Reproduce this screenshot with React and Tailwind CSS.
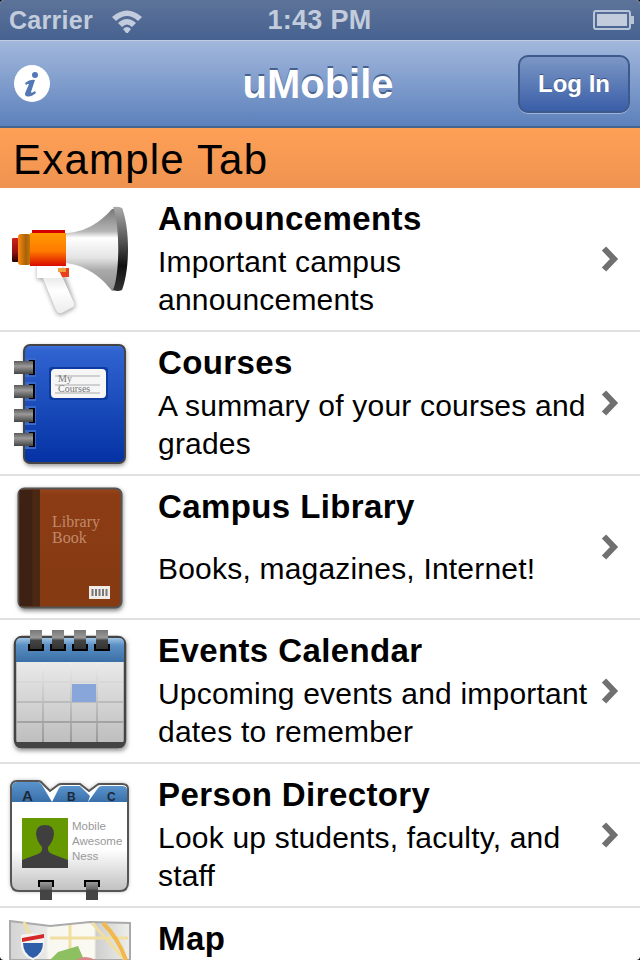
const F = "font-['Liberation_Sans',Arial,sans-serif]";

function Megaphone() {
  return (
    <svg width="144" height="142" viewBox="0 0 144 142" className="block">
      <defs>
        <linearGradient id="mh" x1="0" y1="0" x2="0" y2="1">
          <stop offset="0" stopColor="#777" /><stop offset=".28" stopColor="#b5b5b5" /><stop offset=".36" stopColor="#fff" />
          <stop offset=".6" stopColor="#e4e4e4" /><stop offset=".75" stopColor="#aaa" /><stop offset="1" stopColor="#8f8f8f" />
        </linearGradient>
        <linearGradient id="mo" x1="0" y1="0" x2="0" y2="1">
          <stop offset="0" stopColor="#ff9a00" /><stop offset=".55" stopColor="#ff7a00" /><stop offset="1" stopColor="#d80a00" />
        </linearGradient>
        <linearGradient id="mr" x1="0" y1="0" x2="0" y2="1">
          <stop offset="0" stopColor="#d0221a" /><stop offset=".6" stopColor="#901010" /><stop offset="1" stopColor="#200" />
        </linearGradient>
        <linearGradient id="mc" x1="0" y1="0" x2="1" y2="0">
          <stop offset="0" stopColor="#ff8a10" /><stop offset=".6" stopColor="#a8620a" /><stop offset="1" stopColor="#c87a08" />
        </linearGradient>
        <linearGradient id="me" x1="0" y1="0" x2="0" y2="1">
          <stop offset="0" stopColor="#aaa" /><stop offset=".4" stopColor="#555" /><stop offset=".7" stopColor="#111" /><stop offset="1" stopColor="#333" />
        </linearGradient>
        <linearGradient id="mw" x1="0" y1="0" x2="0" y2="1">
          <stop offset="0" stopColor="#e8e8e8" /><stop offset=".4" stopColor="#fff" /><stop offset="1" stopColor="#ececec" />
        </linearGradient>
        <filter id="mb" x="-30%" y="-30%" width="160%" height="160%"><feGaussianBlur stdDeviation="2" /></filter>
      </defs>
      <path d="M37 78 H62 L75 116 Q76 120 71 122 L62 127 Q58 128 56 124 L43 92 H37 Z" fill="#888" filter="url(#mb)" opacity=".7" />
      <path d="M42 88 H62 L74 115 Q75 119 71 120 L62 125 Q58 126 56 122 Z" fill="url(#mw)" />
      <rect x="37" y="78" width="25" height="12" fill="#fff" />
      <path d="M58 80 H69 V89 H62 Z" fill="#e8401a" /><rect x="58" y="80" width="8" height="4" fill="#f0a040" />
      <path d="M66 45 C88 44 102 32 112 21 L122 20 Q130 50 122 100 L112 103 C102 90 88 78 66 75 Z" fill="url(#mh)" />
      <path d="M113 19 Q118 18 122 20 C130 40 130 82 122 102 Q118 104 113 102 C120 86 120 36 113 19 Z" fill="url(#me)" />
      <rect x="12" y="50" width="7" height="24" rx="1" fill="url(#mr)" />
      <rect x="18" y="46" width="13" height="31" rx="3" fill="url(#mc)" />
      <rect x="32" y="42" width="33" height="3" fill="#d40000" />
      <rect x="30" y="45" width="36" height="33" fill="url(#mo)" />
    </svg>
  );
}

function Notebook() {
  return (
    <svg width="144" height="142" viewBox="0 0 144 142" className="block">
      <defs>
        <linearGradient id="nb" x1="0" y1="0" x2="0" y2="1">
          <stop offset="0" stopColor="#4272dc" /><stop offset=".05" stopColor="#2f63d0" /><stop offset="1" stopColor="#0432a4" />
        </linearGradient>
        <linearGradient id="nr" x1="0" y1="0" x2="0" y2="1">
          <stop offset="0" stopColor="#5a5a5a" /><stop offset=".4" stopColor="#9a9a9a" /><stop offset="1" stopColor="#444" />
        </linearGradient>
        <filter id="ns" x="-10%" y="-10%" width="120%" height="120%"><feGaussianBlur stdDeviation="2" /></filter>
      </defs>
      <rect x="24" y="14" width="102" height="120" rx="7" fill="#999" filter="url(#ns)" />
      <rect x="24" y="13" width="101" height="118" rx="6" fill="url(#nb)" stroke="#444" strokeWidth="2" />
      {[28, 52, 76, 100].map((y) => (
        <g key={y}>
          <rect x="25" y={y - 2} width="11" height="19" fill="#3a68c8" />
          <rect x="29" y={y} width="6" height="15" fill="#000" />
          <rect x="14" y={y + 1} width="19" height="13" fill="url(#nr)" />
        </g>
      ))}
      <rect x="49" y="35" width="59" height="33" rx="3" fill="#0c3aa0" />
      <rect x="51" y="37" width="55" height="29" rx="4" fill="#f6f6f6" />
      <path d="M55 44 H100 M55 53 H100 M55 61 H100" stroke="#aaa" strokeWidth="1" />
      <text x="58" y="50" fontSize="10" fill="#777" fontFamily="Liberation Serif">My</text>
      <text x="58" y="60" fontSize="10" fill="#777" fontFamily="Liberation Serif">Courses</text>
    </svg>
  );
}

function LibraryBook() {
  return (
    <svg width="144" height="142" viewBox="0 0 144 142" className="block">
      <defs>
        <filter id="ls" x="-10%" y="-10%" width="120%" height="120%"><feGaussianBlur stdDeviation="2" /></filter>
        <linearGradient id="lb" x1="0" y1="0" x2="0" y2="1">
          <stop offset="0" stopColor="#9a4618" /><stop offset=".05" stopColor="#8c3c14" /><stop offset="1" stopColor="#853a12" />
        </linearGradient>
      </defs>
      <rect x="18" y="13" width="105" height="122" rx="7" fill="#888" filter="url(#ls)" />
      <rect x="18.5" y="12.5" width="103" height="119" rx="6" fill="url(#lb)" stroke="#555" strokeWidth="2" />
      <path d="M19.5 19 Q19.500 13.500 25 13.500 H40 V130.500 H25 Q19.500 130.500 19.500 125 Z" fill="#4b2814" />
      <rect x="19.500" y="14" width="13" height="116" fill="#3d2214" />
      <text x="52" y="51" fontSize="16" fill="#c08a6a" fontFamily="Liberation Serif">Library</text>
      <text x="52" y="67" fontSize="16" fill="#c08a6a" fontFamily="Liberation Serif">Book</text>
      <rect x="89" y="110" width="21" height="13" fill="#f2ece8" />
      <path d="M92.500 113 V120 M96 113 V120 M99.500 113 V120 M103 113 V120 M106.500 113 V120" stroke="#777" strokeWidth="2" />
    </svg>
  );
}

function Calendar() {
  return (
    <svg width="144" height="142" viewBox="0 0 144 142" className="block">
      <defs>
        <filter id="cs" x="-10%" y="-10%" width="120%" height="120%"><feGaussianBlur stdDeviation="2" /></filter>
        <linearGradient id="cb" x1="0" y1="0" x2="0" y2="1">
          <stop offset="0" stopColor="#f6f6f6" /><stop offset="1" stopColor="#bcbcbc" />
        </linearGradient>
        <linearGradient id="ch" x1="0" y1="0" x2="0" y2="1">
          <stop offset="0" stopColor="#a0c4e4" /><stop offset=".3" stopColor="#5a90c4" /><stop offset="1" stopColor="#3a6ea6" />
        </linearGradient>
        <linearGradient id="cr" x1="0" y1="0" x2="0" y2="1">
          <stop offset="0" stopColor="#777" /><stop offset=".4" stopColor="#999" /><stop offset=".55" stopColor="#444" /><stop offset="1" stopColor="#333" />
        </linearGradient>
        <linearGradient id="cl" gradientUnits="userSpaceOnUse" x1="0" y1="42" x2="0" y2="122">
          <stop offset="0" stopColor="#ececec" /><stop offset="1" stopColor="#989898" />
        </linearGradient>
      </defs>
      <rect x="14" y="18" width="113" height="113" rx="7" fill="#999" filter="url(#cs)" />
      <rect x="15" y="17" width="110" height="110" rx="7" fill="url(#cb)" stroke="#444" strokeWidth="2.500" />
      <path d="M16 42 V23 Q16 18 21 18 H119 Q124 18 124 23 V42 Z" fill="url(#ch)" />
      <rect x="42" y="42" width="2" height="80" fill="url(#cl)" />
      <rect x="70" y="42" width="2" height="80" fill="url(#cl)" />
      <rect x="96" y="42" width="2" height="80" fill="url(#cl)" />
      <rect x="17" y="61" width="106" height="2" fill="#d8d8d8" />
      <rect x="17" y="81" width="106" height="2" fill="#bcbcbc" />
      <rect x="17" y="101" width="106" height="2" fill="#a4a4a4" />
      <rect x="72" y="64" width="24" height="18" fill="#88a6da" />
      <path d="M15 122 H125 V122 Q125 128 119 128 H21 Q15 128 15 122 Z" fill="#444" />
      {[30, 52, 74, 96].map((x) => (
        <g key={x}>
          <rect x={x - 2} y="24" width="16" height="7" fill="#000" />
          <rect x={x} y="10" width="12" height="19" fill="url(#cr)" />
        </g>
      ))}
    </svg>
  );
}

function Directory() {
  return (
    <svg width="144" height="142" viewBox="0 0 144 142" className="block">
      <defs>
        <filter id="ds" x="-10%" y="-10%" width="120%" height="120%"><feGaussianBlur stdDeviation="2" /></filter>
        <linearGradient id="db" x1="0" y1="0" x2="0" y2="1">
          <stop offset="0" stopColor="#fff" /><stop offset=".62" stopColor="#fff" /><stop offset="1" stopColor="#c0c0c0" />
        </linearGradient>
        <linearGradient id="dt" x1="0" y1="0" x2="0" y2="1">
          <stop offset="0" stopColor="#5a94cc" /><stop offset="1" stopColor="#3a70aa" />
        </linearGradient>
        <linearGradient id="dr" x1="0" y1="0" x2="0" y2="1">
          <stop offset="0" stopColor="#999" /><stop offset=".4" stopColor="#666" /><stop offset=".45" stopColor="#444" /><stop offset="1" stopColor="#444" />
        </linearGradient>
      </defs>
      <path d="M11 24 Q11 17 17 17 H38 Q41 17 43 20 L50 27 L58 21 Q59 20 62 20 H80 L89 27 L97 21 Q98 20 100 20 H122 Q128 20 128 25 V118 Q128 127 120 127 H19 Q11 127 11 118 Z" fill="#999" filter="url(#ds)" />
      <path d="M11 24 Q11 17 17 17 H38 Q41 17 43 20 L50 27 L58 21 Q59 20 62 20 H80 L89 27 L97 21 Q98 20 100 20 H122 Q128 20 128 25 V118 Q128 127 120 127 H19 Q11 127 11 118 Z" fill="url(#db)" stroke="#555" strokeWidth="2" />
      <path d="M12 38 V24 Q12 18 17 18 H38 Q40 18 42 21 L52 38 Z" fill="url(#dt)" />
      <path d="M52 38 L59 24 Q60 22 63 22 H80 L90 32 L88 38 Z" fill="url(#dt)" />
      <path d="M88 38 L98 24 Q99 22 102 22 H122 Q127 22 127 26 V38 Z" fill="url(#dt)" />
      <text x="22" y="37" fontSize="15" fontWeight="bold" fill="#1c2a3a" fontFamily="Liberation Sans">A</text>
      <text x="67" y="37" fontSize="12" fontWeight="bold" fill="#1c2a3a" fontFamily="Liberation Sans">B</text>
      <text x="107" y="37" fontSize="12" fontWeight="bold" fill="#1c2a3a" fontFamily="Liberation Sans">C</text>
      <rect x="22" y="54" width="46" height="50" fill="#669900" />
      <path d="M22 104 V96 L38 90 Q43 88 42 83 Q37 78 36 70 Q36 61 45 61 Q54 61 54 70 Q53 78 48 83 Q47 88 52 90 L68 96 V104 Z" fill="#3f3f3f" />
      <text x="72" y="66" fontSize="11.500" fill="#999" fontFamily="Liberation Sans">Mobile</text>
      <text x="72" y="81" fontSize="11.500" fill="#999" fontFamily="Liberation Sans">Awesome</text>
      <text x="72" y="96" fontSize="11.500" fill="#999" fontFamily="Liberation Sans">Ness</text>
      {[38, 84].map((x) => (
        <g key={x}>
          <rect x={x} y="116" width="16" height="7" fill="#000" />
          <rect x={x + 2} y="118" width="12" height="18" fill="url(#dr)" />
        </g>
      ))}
    </svg>
  );
}

function MapIcon() {
  return (
    <svg width="144" height="52" viewBox="0 0 144 52" className="block">
      <defs>
        <linearGradient id="mf" x1="0" y1="0" x2="1" y2="0">
          <stop offset="0" stopColor="#d4d4d4" /><stop offset=".3" stopColor="#e8e8e6" /><stop offset=".32" stopColor="#f8f8f0" /><stop offset=".7" stopColor="#fafaf2" /><stop offset=".72" stopColor="#cfcfcf" /><stop offset="1" stopColor="#eeeeea" />
        </linearGradient>
      </defs>
      <path d="M10 13 L50 18 L90 14 L130 15 V52 H10 Z" fill="url(#mf)" stroke="#aaa" strokeWidth="2" />
      <path d="M50 30 H128 M70 17 V52 M24 14 L36 40 M92 15 L125 52" stroke="#f0dfa0" strokeWidth="3" fill="none" />
      <path d="M103 15 Q118 30 126 52" stroke="#f2b84c" strokeWidth="4" fill="none" />
      <path d="M50 52 L58 44 L78 38 L84 52 Z" fill="#8dc060" />
      <path d="M76 52 Q84 46 96 52 Z" fill="#d88888" />
      <path d="M21 27 Q32 24 44 27 V36 Q44 48 33 52 Q21 48 21 36 Z" fill="#f4f4f4" />
      <path d="M22 30 L44 26 V30 L22 34 Z" fill="#d62828" />
      <path d="M23 35 H43 Q43 46 33 50 Q23 46 23 35 Z" fill="#2f5ea8" />
    </svg>
  );
}

function Chevron() {
  return (
    <svg width="22" height="28" viewBox="0 0 22 28" className="block">
      <path d="M5 3.500 L15 14 L5 24.500" fill="none" stroke="#707070" strokeWidth="6" />
    </svg>
  );
}

const rows = [
  { t: "Announcements", d: "Important campus announcements", I: Megaphone },
  { t: "Courses", d: "A summary of your courses and grades", I: Notebook },
  { t: "Campus Library", d: "Books, magazines, Internet!", I: LibraryBook },
  { t: "Events Calendar", d: "Upcoming events and important dates to remember", I: Calendar },
  { t: "Person Directory", d: "Look up students, faculty, and staff", I: Directory },
];

export default function App() {
  return (
    <div className="w-[640px] h-[960px] bg-black">
      <div className={`w-[640px] h-[960px] overflow-hidden rounded-[4px] bg-white ${F}`}>
        <div className="h-10 flex items-center justify-between pl-[9px] pr-[5px] bg-gradient-to-b from-[#5d7399] to-[#466290] text-[#c2ccdc] text-[27px] leading-none font-bold">
          <div className="flex items-center w-[200px] gap-[18px]">
            <span className="text-[25px] tracking-[0.3px]">Carrier</span>
            <svg width="32" height="26" viewBox="0 0 32 26" className="block">
              <path d="M1 10 Q16 -3 31 10 L27 14 Q16 4 5 14 Z" fill="#c2ccdc" />
              <path d="M7 16 Q16 8 25 16 L21 20 Q16 15 11 20 Z" fill="#c2ccdc" />
              <path d="M16 27 L12 22 Q16 18 20 22 Z" fill="#c2ccdc" />
            </svg>
          </div>
          <span className="tracking-[0.3px] mr-[5px]">1:43 PM</span>
          <div className="w-[200px] flex justify-end">
            <svg width="42" height="22" viewBox="0 0 42 22" className="block">
              <rect x="1" y="2" width="36" height="18" rx="2" fill="none" stroke="#b8c4d8" strokeWidth="2" />
              <rect x="4" y="5" width="30" height="12" fill="#c2ccdc" />
              <rect x="38" y="7" width="3" height="8" fill="#b8c4d8" />
            </svg>
          </div>
        </div>

        <div className="h-[88px] flex items-center justify-between pl-[13px] pr-[10px] border-t border-t-[#c0cde4] border-b-2 border-b-[#44648f] bg-gradient-to-b from-[#a2b8dc] to-[#5d81bc]">
          <div className="w-[105px]">
            <svg width="38" height="38" viewBox="0 0 38 38" className="block">
              <ellipse cx="19" cy="18.500" rx="18" ry="18.500" fill="#fff" />
              <circle cx="22" cy="10" r="3" fill="#5478b4" />
              <path d="M12 18 Q17 14 22 15 L18 27 Q18 29 22 26 L23 28 Q17 33 13 31 Q11 30 13 26 L16 19 Q14 19 13 20 Z" fill="#5478b4" />
            </svg>
          </div>
          <span className="text-[40px] leading-none font-bold text-white [text-shadow:0_-2px_0_#47618e]">uMobile</span>
          <div className="w-[112px] h-[58px] rounded-[10px] border-2 border-[#3e5a8c] bg-gradient-to-b from-[#7d97c4] to-[#3a5ea8] flex items-center justify-center text-white font-bold text-[24px] [text-shadow:0_-1px_0_#3a5080] shadow-[0_1px_0_#a0b4d4]">
            Log In
          </div>
        </div>

        <div className="h-[60px] flex items-center pl-[13px] pt-[3px] bg-gradient-to-b from-[#ffa056] to-[#ee9350] text-black text-[42px] leading-none tracking-[1.200px]">
          Example Tab
        </div>

        {rows.map(({ t, d, I }) => (
          <div key={t} className="h-[144px] flex border-b-2 border-b-[#e0e0e0]">
            <div className="w-[158px] shrink-0"><I /></div>
            <div className="flex-1 pt-3 text-black">
              <div className="text-[33px] leading-[38px] font-bold tracking-[0.4px]">{t}</div>
              <div className="mt-[5px] h-[76px] flex items-center text-[30px] leading-[38px] tracking-[0.2px]"><span>{d}</span></div>
            </div>
            <div className="w-[42px] shrink-0 flex items-center pl-[1px]"><Chevron /></div>
          </div>
        ))}

        <div className="h-[52px] flex overflow-hidden">
          <div className="w-[158px] shrink-0"><MapIcon /></div>
          <div className="flex-1 pt-3 text-[33px] leading-[38px] font-bold tracking-[0.4px] text-black">Map</div>
        </div>
      </div>
    </div>
  );
}
